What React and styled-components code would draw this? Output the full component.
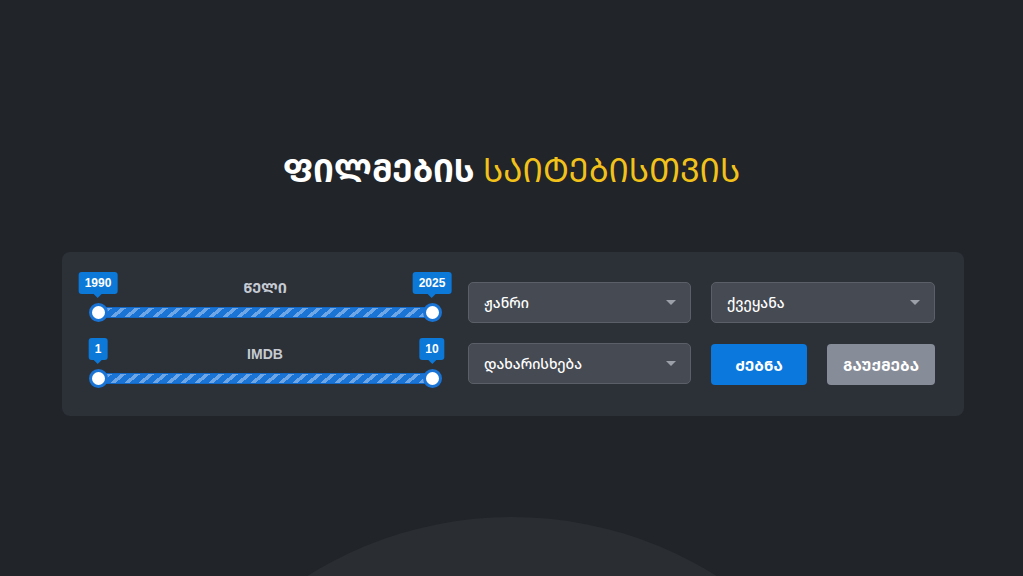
import React from 'react';
import styled, { createGlobalStyle } from 'styled-components';

const GlobalStyle = createGlobalStyle`
    *,
    ::after,
    ::before {
        margin: 0;
        padding: 0;
        box-sizing: border-box;
    }
    body {
        background: #212428;
        font-family: 'Noto Sans Georgian', 'DejaVu Sans', sans-serif;
    }
`;

const Page = styled.div`
    position: relative;
    min-height: 100vh;
    overflow: hidden;
    padding: 148px 0 0 3px;
`;

const Glow = styled.div`
    position: absolute;
    left: 50%;
    top: 517px;
    width: 770px;
    height: 770px;
    margin-left: -385px;
    border-radius: 50%;
    background: #2a2d32;
    z-index: 0;
`;

const Title = styled.h1`
    position: relative;
    z-index: 1;
    margin-left: -3px;
    text-align: center;
    font-size: 32px;
    line-height: 44px;
    font-weight: 700;
    color: #ffffff;
`;

const Accent = styled.span`
    color: #f2c21b;
    font-weight: 400;
`;

const Card = styled.div`
    position: relative;
    z-index: 1;
    width: 902px;
    margin: 60px auto 0;
    padding: 20px 29px 29px 28px;
    background: #2c3037;
    border-radius: 8px;
    display: flex;
    gap: 28px;
    align-items: flex-start;
`;

const Sliders = styled.div`
    width: 350px;
    display: flex;
    flex-direction: column;
    gap: 17px;
`;

const SliderBlock = styled.div`
    position: relative;
    padding: 0 8px;
`;

const SliderHead = styled.div`
    height: 31px;
    display: flex;
    align-items: center;
    justify-content: center;
`;

const SliderLabel = styled.span`
    font-family: ${(p) =>
        p.$latin
            ? "'Liberation Sans', sans-serif"
            : "'Noto Sans Georgian', sans-serif"};
    font-size: 14px;
    font-weight: 700;
    color: #c6cbd3;
`;

const TrackRow = styled.div`
    position: relative;
    height: 18px;
    display: flex;
    align-items: center;
`;

const Track = styled.div`
    width: 100%;
    height: 9px;
    border-radius: 2px;
    background: repeating-linear-gradient(
        -40deg,
        #1a74d6 0px,
        #1a74d6 5.5px,
        #6ea6e6 5.5px,
        #6ea6e6 9px
    );
    box-shadow: 0 0 0 1px #1266c4;
`;

const Thumb = styled.div`
    position: absolute;
    top: -0.5px;
    ${(p) => (p.$end ? 'right: -9.5px;' : 'left: -9.5px;')}
    width: 19px;
    height: 19px;
    border-radius: 50%;
    background: #ffffff;
    border: 3px solid #1a74d6;
`;

const Bubble = styled.div`
    position: absolute;
    top: -34px;
    left: 50%;
    transform: translateX(-50%);
    height: 22px;
    padding: 0 6px;
    border-radius: 3px;
    background: #0c78d8;
    color: #ffffff;
    font-family: 'Liberation Sans', sans-serif;
    font-size: 12px;
    font-weight: 700;
    line-height: 22px;
    white-space: nowrap;

    &::after {
        content: '';
        position: absolute;
        left: 50%;
        bottom: -4px;
        margin-left: -4px;
        border-left: 4px solid transparent;
        border-right: 4px solid transparent;
        border-top: 4px solid #0c78d8;
    }
`;

const Controls = styled.div`
    flex: 1;
    margin-top: 10px;
    display: grid;
    grid-template-columns: 223px 224px;
    column-gap: 20px;
    row-gap: 20px;
`;

const Select = styled.div`
    height: 41px;
    padding: 0 14px 0 15px;
    display: flex;
    align-items: center;
    justify-content: space-between;
    background: #464b53;
    border: 1px solid #5b6068;
    border-radius: 5px;
    color: #ffffff;
    font-size: 14px;
    font-weight: 500;
`;

const Caret = styled.span`
    width: 0;
    height: 0;
    border-left: 5px solid transparent;
    border-right: 5px solid transparent;
    border-top: 5px solid #9ca1a9;
`;

const Buttons = styled.div`
    display: flex;
    gap: 20px;
    padding-top: 1px;
`;

const Button = styled.button`
    height: 41px;
    width: ${(p) => p.$w}px;
    flex: ${(p) => (p.$grow ? 1 : 'none')};
    border: none;
    border-radius: 4px;
    background: ${(p) => (p.$muted ? '#868c98' : '#0a78dc')};
    color: #ffffff;
    font-family: 'Noto Sans Georgian', sans-serif;
    font-size: 15px;
    font-weight: 700;
    cursor: pointer;
`;

const RangeSlider = ({ label, min, max, latin }) => (
    <SliderBlock>
        <SliderHead>
            <SliderLabel $latin={latin}>{label}</SliderLabel>
        </SliderHead>
        <TrackRow>
            <Track />
            <Thumb>
                <Bubble>{min}</Bubble>
            </Thumb>
            <Thumb $end>
                <Bubble>{max}</Bubble>
            </Thumb>
        </TrackRow>
    </SliderBlock>
);

const App = () => (
    <Page>
        <GlobalStyle />
        <Glow />
        <Title>
            ᲤᲘᲚᲛᲔᲑᲘᲡ <Accent>ᲡᲐᲘᲢᲔᲑᲘᲡᲗᲕᲘᲡ</Accent>
        </Title>
        <Card>
            <Sliders>
                <RangeSlider label='ᲬᲔᲚᲘ' min='1990' max='2025' />
                <RangeSlider label='IMDB' min='1' max='10' latin />
            </Sliders>
            <Controls>
                <Select>
                    ჟანრი
                    <Caret />
                </Select>
                <Select>
                    ქვეყანა
                    <Caret />
                </Select>
                <Select>
                    დახარისხება
                    <Caret />
                </Select>
                <Buttons>
                    <Button $w={96}>ᲫᲔᲑᲜᲐ</Button>
                    <Button $muted $grow>
                        ᲒᲐᲣᲥᲛᲔᲑᲐ
                    </Button>
                </Buttons>
            </Controls>
        </Card>
    </Page>
);

export default App;
